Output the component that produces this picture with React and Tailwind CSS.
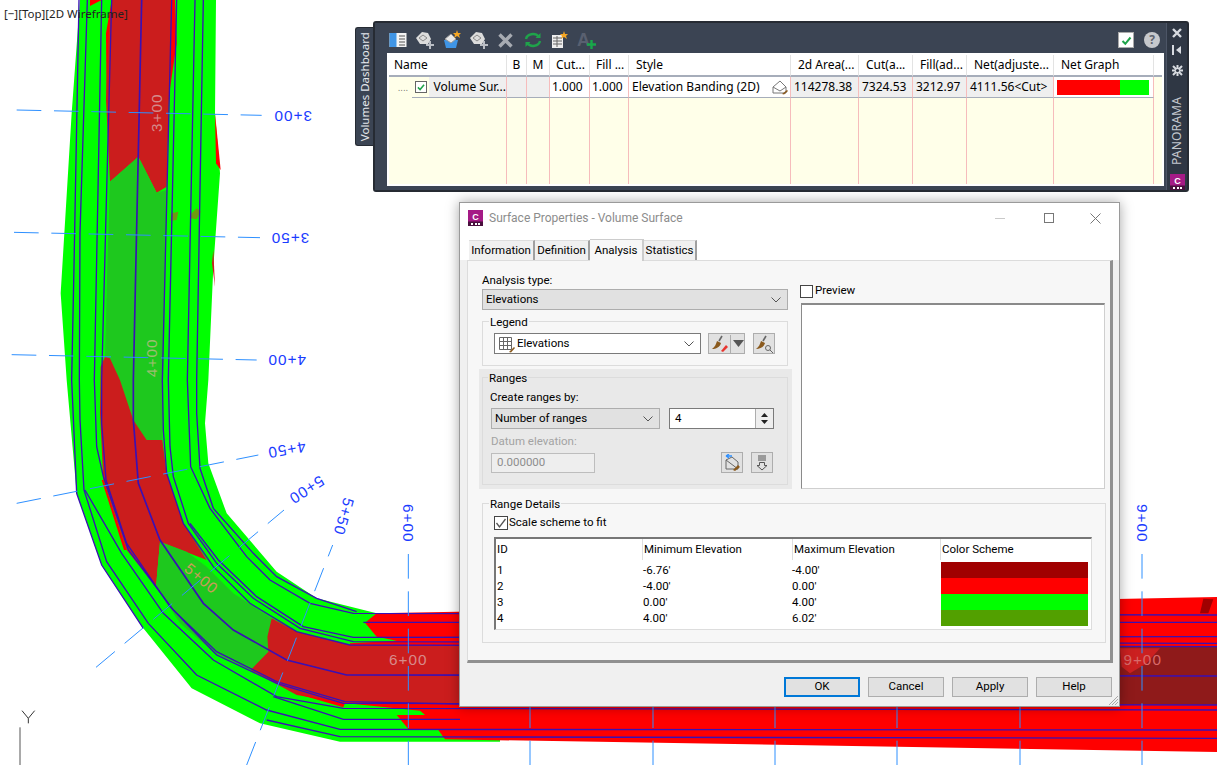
const BOTTOM = 1140;
const shift = (s) => s.split(" ").map((p) => { const [x, y] = p.split(","); return `${x},${Number(y) + BOTTOM}`; }).join(" ");

const LINES = [
  ["237,0 222,800 215,1140", "215,0 230,340 305,555 430,745"],
  ["262,0 240,700 238,1140", "238,0 240,120 252,330 320,545 445,730 590,885 800,990 1020,1048 3651,1050"],
  ["", "255,330 365,520 490,700 640,840 830,950 1030,985 3651,990"],
  ["305,0 283,1140", "283,0 290,200 310,290 385,510 520,690 650,825 830,910 1030,970 3651,975"],
  ["335,0 305,1140", "305,0 305,130 318,300 380,490 510,680 650,815 830,905 1035,965 1380,972"],
  ["425,0 400,1140", "400,0 400,120 415,310 480,480 610,670 700,750 860,840 1040,885 3651,888"],
  ["515,0 487,1140", "487,0 490,150 500,280 550,430 640,560 750,670 890,755 1050,795 3651,800"],
  ["530,0 505,1140", "505,0 510,200 520,290 565,430 650,550 760,655 900,745 1060,785 3651,790"],
  ["", "570,430 655,540 770,650 910,740 1060,772 3651,770"],
  ["585,0 562,1140", "562,0 572,260 630,385 740,530 810,600 930,670 1060,700 3651,705"],
  ["610,0 590,1140", "590,0 590,100 600,265 640,385 760,520 830,590 950,655 1070,695"],
  ["", "1090,727 3651,727"],
  ["", "820,950 1030,1018 1380,1018"],
  ["", "800,1020 1020,1070 3651,1075"],
];

const lbl = "#1a3cff";
function Road() {
  return (
    <svg className="absolute inset-0" width="1217" height="765" viewBox="0 0 3651 2295">
      <polygon fill="#00ff00" points={`240,0 648,0 645,340 660,520 640,800 625,1140 ${shift("615,130 625,250 680,400 830,575 950,655 1130,700 1500,700 1500,1085 1020,1085 780,1030 575,925 430,745 305,555 230,340 200,0")} 182,880 215,340`} />
      <polygon fill="#ff0000" points="270,0 305,0 270,18" />
      <polygon fill="#ff0000" points="645,340 662,510 648,490" />
      <polygon fill="#cb1d1d" points="640,750 645,860 636,790" />
      <polygon fill="#ff0000" points="318,100 335,0 525,0 530,130 505,300 320,300" />
      <polygon fill="#cb1d1d" points="335,0 510,0 512,100 500,560 470,578 415,470 330,545 318,300 325,120" />
      <polygon fill="#1ec81e" points={`330,545 415,470 470,578 500,570 495,900 490,1140 ${shift("487,180 440,180 400,120 360,0")} 330,1075 315,1070 322,800`} />
      <polygon fill="#6f9a10" points="515,640 535,635 530,660 512,662" />
      <polygon fill="#6f9a10" points="575,640 590,625 602,635 590,658 572,655" />
      <g transform={`translate(0 ${BOTTOM})`}>
        <polygon fill="#ff0000" points="1130,700 3651,651 3651,1116 1335,1078 1315,1050 1225,1047 1190,1005 1275,1005 1260,992 1040,970 1050,790 1190,782 1130,770 1095,728" />
        <polygon fill="#cb1d1d" points="315,-70 330,-65 360,0 400,120 440,180 487,180 500,280 550,430 620,540 480,485 468,620 380,510 310,300 300,100 302,-40" />
        <polygon fill="#ff0000" points="310,300 380,510 372,510 305,300" />
        <polygon fill="#1ec81e" points="480,485 560,515 620,560 700,640 815,715 802,770 805,815 752,870 650,825 540,730 468,620" />
        <polygon fill="#cb1d1d" points="815,715 890,755 1050,795 3400,800 3400,975 1035,970 890,945 752,870 805,815 802,770" />
        <polygon fill="#ff0000" points="885,940 1035,970 1030,982" />
        <polygon fill="#8f1a1a" points="3360,801 3651,801 3651,975 3360,975" />
        <polygon fill="#cb2020" points="3360,805 3480,805 3440,850 3390,880 3365,860" />
        <polygon fill="#a00000" points="3610,656 3640,658 3625,700 3600,700" />
      </g>
      {LINES.map(([a, b], i) => (
        <polyline key={i} fill="none" stroke="#3a10b5" strokeWidth={i === 5 ? 5 : 4} points={`${a} ${shift(b)}`} />
      ))}
      <g fill="none" stroke="#2e90ff" strokeWidth="3" strokeDasharray="74 38">
        <line x1="50" y1="330" x2="785" y2="346" />
        <line x1="42" y1="697" x2="780" y2="713" />
        <line x1="35" y1="1064" x2="770" y2="1080" />
        <line x1="50" y1="1510" x2="775" y2="1365" />
        <line x1="288" y1="2002" x2="852" y2="1530" />
        <line x1="740" y1="2295" x2="998" y2="1635" />
        {[1225, 1590, 1959, 2325, 2691, 3060, 3426].map((x) => (
          <line key={x} x1={x} y1="1662" x2={x} y2="2295" />
        ))}
      </g>
      <g fontFamily="'Liberation Sans', sans-serif" fontSize="46" fill={lbl} textAnchor="middle" dominantBaseline="central" letterSpacing="3">
        <text transform="translate(878 348) rotate(180)">3+00</text>
        <text transform="translate(870 715) rotate(180)">3+50</text>
        <text transform="translate(860 1082) rotate(180)">4+00</text>
        <text transform="translate(860 1350) rotate(170)">4+50</text>
        <text transform="translate(920 1470) rotate(147)">5+00</text>
        <text transform="translate(1032 1550) rotate(106)">5+50</text>
        <text transform="translate(1225 1570) rotate(90)">6+00</text>
        <text transform="translate(3427 1570) rotate(90)">9+00</text>
      </g>
      <g fontFamily="'Liberation Sans', sans-serif" fontSize="46" textAnchor="middle" dominantBaseline="central" letterSpacing="3">
        <text fill="#d58a8a" transform="translate(470 338) rotate(-90)">3+00</text>
        <text fill="#9dbd70" transform="translate(453 1073) rotate(-90)">4+00</text>
        <text fill="#c99a5a" transform="translate(605 1735) rotate(40)">5+00</text>
        <text fill="#d88a8a" x="1225" y="1978">6+00</text>
        <text fill="#d96a6a" x="3428" y="1978">9+00</text>
      </g>
      <g fill="none" stroke="#333" strokeWidth="3">
        <path d="M66 2132 L85 2155 L104 2132 M85 2155 V2170" />
        <path d="M60 2182 V2295" stroke="#555" />
      </g>
    </svg>
  );
}

const Book = () => (
  <svg width="18" height="16" viewBox="0 0 18 16"><rect x="0.5" y="1" width="17" height="14" fill="#f4f4f4" /><rect x="0.5" y="1" width="7" height="14" fill="#3f95e6" /><path d="M10 4h6M10 7h6M10 10h6M10 13h6" stroke="#555" /></svg>
);
const Surf = () => (
  <svg width="20" height="20" viewBox="0 0 20 20">
    <path d="M1 8 L7 2 L13 3 L16 9 L13 14 L5 14 Z" fill="#dcdcdc" />
    <path d="M4 8 L8 5 L12 8 L8 11Z" fill="none" stroke="#8a8a8a" />
    <path d="M15 11v8M11 15h8" stroke="#b9bdc4" strokeWidth="2" />
  </svg>
);
const Bucket = () => (
  <svg width="20" height="20" viewBox="0 0 20 20">
    <path d="M2 10 H16 L14 18 H4 Z" fill="#3f95e6" />
    <path d="M3 9 L9 4 L14 9 L9 13 Z" fill="#e8e8e8" stroke="#999" />
    <path d="M15 0 L16 3 L19 3 L17 5 L18 8 L15 6 L12 8 L13 5 L11 3 L14 3Z" fill="#f5a623" />
  </svg>
);
const Sheet = () => (
  <svg width="18" height="18" viewBox="0 0 18 18">
    <rect x="1" y="4" width="11" height="13" fill="#eee" />
    <path d="M2 7h9M2 10h9M2 13h9M6 5v11" stroke="#666" />
    <path d="M13 0 L14 3 L17 3 L15 5 L16 8 L13 6 L10 8 L11 5 L9 3 L12 3Z" fill="#f5a623" />
  </svg>
);
const Sync = () => (
  <svg width="18" height="18" viewBox="0 0 18 18" fill="none" stroke="#1fa34a" strokeWidth="2.4">
    <path d="M2 8 C3 3 11 1 15 6" /><path d="M16 10 C15 15 7 17 3 12" />
    <path d="M16.5 2 V7 H11.5 Z" fill="#1fa34a" stroke="none" /><path d="M1.5 16 V11 H6.5 Z" fill="#1fa34a" stroke="none" />
  </svg>
);
const Check = ({ size = 13 }) => (
  <svg width={size} height={size} viewBox="0 0 13 13"><path d="M2.5 7 L5.3 9.8 L10.5 3.5" fill="none" stroke="#1fa34a" strokeWidth="2" /></svg>
);
const Brush = ({ tail }) => (
  <svg width="18" height="18" viewBox="0 0 18 18">
    <path d="M11 1 L8 6" stroke="#666" strokeWidth="1.6" />
    <path d="M6 6 L10 8 C9 12 5 14 1 14 C4 12 5 9 6 6Z" fill="#8a5a1e" />
    {tail === "pen" && <path d="M10 16 L15 10 L17 12 L12 17 Z" fill="#e8352f" />}
    {tail === "glass" && <g fill="none" stroke="#666"><circle cx="13" cy="13" r="2.5" /><path d="M15 15 L18 18" /></g>}
  </svg>
);
const Chev = () => (
  <svg width="12" height="8" viewBox="0 0 12 8" className="shrink-0"><path d="M1.5 1.5 L6 6 L10.5 1.5" fill="none" stroke="#555" /></svg>
);
const CLogo = ({ w = 15, h = 16 }) => (
  <svg width={w} height={h} viewBox="0 0 15 16"><rect width="15" height="16" fill="#a51a86" /><rect y="11.5" width="15" height="4.5" fill="#4a0f3e" /><text x="7.5" y="9.5" textAnchor="middle" fontFamily="'Liberation Sans', sans-serif" fontWeight="700" fontSize="9" fill="#fff">C</text><path d="M3 13h2v2H3zM7 13h2v2H7zM10 13h2v2h-2z" fill="#fff" /></svg>
);

const COLS = [
  { h: "Name", w: 118 },
  { h: "B", w: 20, c: true, bg: "bg-[#efefef]" },
  { h: "M", w: 23, c: true, bg: "bg-[#efefef]" },
  { h: "Cut...", w: 40, v: "1.000", bg: "bg-white", tight: true },
  { h: "Fill ...", w: 39, v: "1.000", bg: "bg-white", tight: true },
  { h: "Style", w: 162, v: "Elevation Banding (2D)", bg: "bg-white", style: true },
  { h: "2d Area(...", w: 68, v: "114278.38", bg: "bg-[#efefef]" },
  { h: "Cut(a...", w: 54, v: "7324.53", bg: "bg-[#efefef]" },
  { h: "Fill(ad...", w: 54, v: "3212.97", bg: "bg-[#efefef]" },
  { h: "Net(adjuste...", w: 87, v: "4111.56<Cut>", bg: "bg-[#efefef]" },
  { h: "Net Graph", w: 100, graph: true },
];

function Panel() {
  return (
    <div className="absolute left-[355px] top-[21px] flex font-['Noto_Sans',sans-serif] text-[12px] leading-none text-black">
      <div className="mt-[6px] flex h-[119px] w-[18px] items-center justify-center rounded-l-[3px] border border-r-0 border-[#262b33] bg-[#3b4453]">
        <span className="-rotate-90 whitespace-nowrap text-[11.5px] text-[#e4e7ec]">Volumes Dashboard</span>
      </div>
      <div className="flex h-[171px] w-[816px] rounded-[3px] border-2 border-[#262b33] bg-[#2f3744]">
        <div className="flex w-[792px] shrink-0 flex-col border-r border-[#4c5566] bg-[#3b4453]">
          <div className="flex h-[30px] shrink-0 items-center pl-[9px] pr-[6px] pt-[4px]">
            {[<Book key="a" />, <Surf key="b" />, <Bucket key="c" />, <Surf key="d" />].map((ic, i) => (
              <span key={i} className="flex w-[27px] items-center justify-center">{ic}</span>
            ))}
            <span className="flex w-[27px] justify-center">
              <svg width="15" height="15" viewBox="0 0 15 15"><path d="M1.5 1.5 L13.5 13.5 M13.5 1.5 L1.5 13.5" stroke="#a7abb2" strokeWidth="3.4" /></svg>
            </span>
            <span className="flex w-[27px] justify-center"><Sync /></span>
            <span className="flex w-[27px] justify-center"><Sheet /></span>
            <span className="relative flex w-[27px] justify-center pr-[6px] font-['Liberation_Sans',sans-serif] text-[18px] font-bold text-[#596070]">
              A
              <svg width="11" height="11" viewBox="0 0 11 11" className="absolute left-[13px] top-[8px]"><path d="M5.5 1v9M1 5.5h9" stroke="#19a84a" strokeWidth="2.4" /></svg>
            </span>
            <span className="flex-1" />
            <span className="mr-[10px] flex h-[16px] w-[16px] items-center justify-center border border-[#aaa] bg-white"><Check /></span>
            <span className="flex h-[16px] w-[16px] items-center justify-center rounded-full bg-[#c6c8cc] text-[12px] font-bold text-[#5d636e]">?</span>
          </div>
          <div className="ml-[12px] flex h-[133px] w-[777px] border-2 border-white bg-[#ffffe9]">
            {COLS.map((c) => (
              <div key={c.h} style={{ width: c.w }} className="flex shrink-0 flex-col">
                <div className={`flex h-[22px] shrink-0 items-center whitespace-nowrap border-b-2 border-r border-b-[#a6adba] border-r-[#e3e3e3] bg-white ${c.h === "Name" ? "pl-[5px]" : c.tight ? "pl-[6px]" : c.c ? "pl-[1px]" : "pl-[7px]"}`}>
                  <span className={c.c ? "w-full pr-[1px] text-center" : ""}>{c.h}</span>
                </div>
                {c.h === "Name" ? (
                  <div className="flex h-[21px] shrink-0 border-r border-[#f6bcbc]">
                    <div className="flex w-[24px] items-center justify-end pr-[4px] text-[#666]"><span className="text-[8px] tracking-[0.5px]">....</span></div>
                    <div className="flex flex-1 border-b border-[#a6adba] bg-[#efefef]">
                      <div className="flex w-[17px] items-center justify-center bg-[#ffffe9]">
                        <span className="flex h-[12px] w-[12px] items-center justify-center border border-[#666] bg-white"><Check size={10} /></span>
                      </div>
                      <span className="flex items-center whitespace-nowrap pl-[4px]">Volume Sur...</span>
                    </div>
                  </div>
                ) : c.graph ? (
                  <div className="flex h-[21px] shrink-0 items-center border-b border-r border-b-[#a6adba] border-r-[#f6bcbc] bg-white pl-[3px]">
                    <div className="h-[15px] w-[63px] bg-[#ff0000]" />
                    <div className="h-[15px] w-[29px] bg-[#00ff00]" />
                  </div>
                ) : (
                  <div className={`flex h-[21px] shrink-0 items-center justify-between whitespace-nowrap border-b border-r border-b-[#a6adba] border-r-[#f6bcbc] ${c.tight ? "pl-[2px]" : "pl-[3px]"} ${c.bg}`}>
                    <span>{c.v}</span>
                    {c.style && (
                      <svg width="17" height="16" viewBox="0 0 17 16" className="mr-[1px]"><path d="M1 8 L8 2 L14 8 V14 H1Z M1 8 L8 12 L14 8" fill="none" stroke="#777" /><path d="M10 15 L15 11 L16 12 L12 15.5Z" fill="#8a5a1e" /></svg>
                    )}
                  </div>
                )}
                <div className="flex-1 border-r border-[#f6bcbc]" />
              </div>
            ))}
            <div className="flex flex-1 flex-col"><div className="h-[22px] border-b-2 border-[#a6adba] bg-white" /></div>
          </div>
        </div>
        <div className="flex w-[20px] min-w-0 shrink-0 flex-col items-center pt-[3px] text-[#d8dbe0]">
          <svg width="12" height="12" viewBox="0 0 12 12" className="mt-[1px] shrink-0"><path d="M2 2 L10 10 M10 2 L2 10" stroke="#d8dbe0" strokeWidth="2.4" /></svg>
          <svg width="12" height="12" viewBox="0 0 12 12" className="mt-[5px] shrink-0"><path d="M2 1v10" stroke="#d8dbe0" strokeWidth="2" /><path d="M10 2 L5 6 L10 10Z" fill="#d8dbe0" /></svg>
          <svg width="13" height="13" viewBox="0 0 13 13" className="mt-[8px] shrink-0"><path d="M2 2 L11 11 M11 2 L2 11 M6.5 1v11M1 6.5h11" stroke="#d8dbe0" strokeWidth="2" /><circle cx="6.5" cy="6.5" r="1.6" fill="#2f3744" /></svg>
          <div className="flex h-[94px] w-[20px] shrink-0 items-center justify-center pt-[14px]">
            <span className="-rotate-90 whitespace-nowrap text-[12px] tracking-[0.2px] text-[#c3c7ce]">PANORAMA</span>
          </div>
          <div className="mt-[3px] shrink-0"><CLogo /></div>
        </div>
      </div>
    </div>
  );
}

const Combo = ({ w, children, white }) => (
  <div style={{ width: w }} className={`flex h-[21px] items-center justify-between border pl-[3px] pr-[5px] ${white ? "border-[#7a7a7a] bg-white" : "border-[#adadad] bg-[#e1e1e1]"}`}>
    <span className="flex items-center whitespace-nowrap pt-[1px]">{children}</span>
    <Chev />
  </div>
);
const IconBtn = ({ children }) => (
  <div className="flex h-[21px] w-[22px] items-center justify-center border border-[#adadad] bg-[#e1e1e1]">{children}</div>
);
const Group = ({ label, className, children, lx = 6 }) => (
  <div className={`relative border border-[#dcdcdc] ${className}`}>
    <span style={{ left: lx }} className="absolute top-[-5px] bg-inherit px-[1px] leading-none">{label}</span>
    {children}
  </div>
);

function Dialog() {
  const rows = [["1", "-6.76'", "-4.00'", "bg-[#a00000]"], ["2", "-4.00'", "0.00'", "bg-[#ff0000]"], ["3", "0.00'", "4.00'", "bg-[#00ff00]"], ["4", "4.00'", "6.02'", "bg-[#52a000]"]];
  return (
    <div className="absolute left-[459px] top-[202px] flex h-[505px] w-[661px] flex-col border border-[#9a9a9a] bg-[#f0f0f0] font-['Roboto',sans-serif] text-[11.5px] leading-none text-black shadow-[0_0_12px_rgba(0,0,0,0.35)]">
      <div className="flex h-[30px] shrink-0 items-center bg-white pl-[8px]">
        <CLogo w={15} h={16} />
        <span className="ml-[6px] text-[12px] text-[#8c8c8c]">Surface Properties - Volume Surface</span>
        <span className="flex-1" />
        <span className="mr-[39px] h-px w-[10px] bg-[#c9c9c9]" />
        <span className="mr-[36px] h-[10px] w-[10px] border border-[#777]" />
        <svg width="11" height="11" viewBox="0 0 11 11" className="mr-[18px]"><path d="M0.5 0.5 L10.5 10.5 M10.5 0.5 L0.5 10.5" stroke="#777" /></svg>
      </div>
      <div className="flex h-[27px] shrink-0 items-end bg-white pl-[9px]">
        {[["Information", 66], ["Definition", 55], ["Analysis", 54, true], ["Statistics", 53]].map(([t, w, on]) => (
          <div key={t} style={{ width: w }} className={`flex items-center justify-center border-r-2 border-[#a0a0a0] ${on ? "relative z-10 mb-[-1px] h-[22px] border-t border-x-0 border-t-[#ccc] border-r-[#ccc] bg-[#f7f7f7]" : "h-[20px] border-t border-t-[#ddd] bg-[#f0f0f0]"}`}>{t}</div>
        ))}
      </div>
      <div className="mx-[7px] flex h-[403px] w-[646px] shrink-0 flex-col border-t border-l border-t-[#dcdcdc] border-l-[#dcdcdc] border-b-[3px] border-r-[3px] border-b-[#909090] border-r-[#909090] bg-[#f7f7f7] pl-[14px]">
        <div className="flex">
          <div className="flex w-[312px] shrink-0 flex-col">
            <div className="h-[28px] pt-[14px]">Analysis type:</div>
            <div className="h-[21px]"><Combo w={306}>Elevations</Combo></div>
            <Group label="Legend" className="mt-[11px] flex h-[45px] w-[306px] items-center bg-[#f7f7f7] pl-[11px]">
              <Combo w={207} white>
                <svg width="18" height="18" viewBox="0 0 18 18" className="mr-[1px]"><path d="M1.5 2.5h12v12h-12zM1.5 6.5h12M1.5 10.5h12M5.5 2.5v12M9.5 2.5v12" fill="none" stroke="#666" /><path d="M11 17 L16 12 L17 13 L13 17.5Z" fill="#8a5a1e" /></svg>
                Elevations
              </Combo>
              <div className="ml-[7px] flex h-[21px] w-[37px] items-center border border-[#adadad] bg-[#e1e1e1]">
                <span className="flex w-[22px] justify-center border-r border-[#adadad]"><Brush tail="pen" /></span>
                <svg width="11" height="7" viewBox="0 0 11 7" className="ml-[2px]"><path d="M0 0 H11 L5.5 7Z" fill="#555" /></svg>
              </div>
              <div className="ml-[8px]"><IconBtn><Brush tail="glass" /></IconBtn></div>
            </Group>
            <div className="ml-[-3px] mt-[3px] h-[120px] w-[313px] bg-[#e9e9e9] pl-[3px] pt-[8px]">
              <Group label="Ranges" lx={5} className="h-[108px] w-[306px] bg-[#e9e9e9] pl-[7px]">
                <div className="h-[24px] pt-[14px]">Create ranges by:</div>
                <div className="ml-[1px] mt-[6px] flex">
                  <Combo w={169}>Number of ranges</Combo>
                  <div className="ml-[9px] flex h-[21px] w-[105px] border border-[#7a7a7a] bg-white">
                    <span className="flex flex-1 items-center pl-[5px]">4</span>
                    <div className="flex w-[18px] flex-col items-center justify-center gap-[3px] border-l border-[#adadad] bg-[#eee]">
                      <svg width="7" height="4" viewBox="0 0 7 4"><path d="M0 4 L3.5 0 L7 4Z" fill="#222" /></svg>
                      <svg width="7" height="4" viewBox="0 0 7 4"><path d="M0 0 L7 0 L3.5 4Z" fill="#222" /></svg>
                    </div>
                  </div>
                </div>
                <div className="h-[18px] pl-[1px] pt-[7px] text-[#a3a3a3]">Datum elevation:</div>
                <div className="ml-[1px] mt-[5px] flex items-center">
                  <div className="flex h-[20px] w-[104px] items-center border border-[#bdbdbd] bg-[#eeeeee] pl-[5px] text-[#8d8d8d]">0.000000</div>
                  <div className="ml-[126px]">
                    <IconBtn>
                      <svg width="18" height="18" viewBox="0 0 18 18" fill="none"><path d="M3 6 L9 3 L15 8 V15 H3Z M3 6 L15 15" stroke="#666" /><path d="M3 2 H9 M3 2 L6 0 M3 2 L6 4" stroke="#2e90ff" strokeWidth="1.3" /><path d="M10 16 L15 11 L17 13 L12 17Z" fill="#8a5a1e" /></svg>
                    </IconBtn>
                  </div>
                  <div className="ml-[8px]">
                    <IconBtn>
                      <svg width="14" height="16" viewBox="0 0 14 16" fill="none" stroke="#555"><path d="M3 1h8M3 3h8M3 5h8" /><path d="M4.5 7.5h5v3h2.5L7 15 2 10.5h2.5z" /></svg>
                    </IconBtn>
                  </div>
                </div>
              </Group>
            </div>
          </div>
          <div className="flex flex-col pl-[6px] pt-[21px]">
            <div className="flex h-[18px] items-center">
              <span className="h-[13px] w-[13px] border border-[#444] bg-white" />
              <span className="ml-[2px]">Preview</span>
            </div>
            <div className="ml-[1px] mt-[3px] h-[186px] w-[304px] border border-[#cfcfcf] border-l-[#8a8a8a] border-t-2 border-t-[#8a8a8a] bg-white" />
          </div>
        </div>
        <Group label="Range Details" className="mt-[14px] h-[140px] w-[624px] bg-[#f7f7f7] pl-[11px]">
          <div className="flex h-[33px] items-center pt-[4px]">
            <span className="flex h-[14px] w-[14px] items-center justify-center border border-[#444] bg-white">
              <svg width="12" height="12" viewBox="0 0 12 12"><path d="M1.5 6 L4.5 10 L10.5 2" fill="none" stroke="#555" strokeWidth="1.3" /></svg>
            </span>
            <span className="ml-[1px]">Scale scheme to fit</span>
          </div>
          <div className="w-[598px] border-l-2 border-t-2 border-[#777] border-b border-r border-b-[#ddd] border-r-[#ddd] bg-white pb-[3px]">
            <div className="flex h-[21px]">
              {[["ID", 146], ["Minimum Elevation", 150], ["Maximum Elevation", 148], ["Color Scheme", 150]].map(([t, w], i) => (
                <div key={t} style={{ width: w }} className={`flex items-center pl-[1px] ${i ? "border-l border-[#dedede]" : ""}`}>{t}</div>
              ))}
            </div>
            {rows.map(([id, a, b, col], i) => (
              <div key={id} className={`flex h-[16px] items-center ${i === 0 ? "mt-[2px]" : ""}`}>
                <span className="w-[146px] pl-[1px] pt-[1px]">{id}</span>
                <span className="w-[150px] pl-[1px] pt-[1px]">{a}</span>
                <span className="w-[149px] pt-[1px]">{b}</span>
                <span className={`h-[16px] w-[147px] ${col}`} />
              </div>
            ))}
          </div>
        </Group>
      </div>
      <div className="relative flex flex-1 items-start justify-end gap-[8px] pr-[7px] pt-[14px]">
        <div className="flex h-[20px] w-[76px] items-center justify-center border-2 border-[#0078d7] bg-[#e1e1e1]">OK</div>
        {["Cancel", "Apply", "Help"].map((t) => (
          <div key={t} className="flex h-[20px] w-[76px] items-center justify-center border border-[#adadad] bg-[#e1e1e1]">{t}</div>
        ))}
        <svg width="12" height="12" viewBox="0 0 12 12" className="absolute bottom-0 right-0"><path d="M11 2 L2 11 M11 5 L5 11 M11 8 L8 11" stroke="#a8a8a8" /></svg>
      </div>
    </div>
  );
}

export default function App() {
  return (
    <div className="relative h-[765px] w-[1217px] overflow-hidden bg-white">
      <Road />
      <div className="absolute left-[4px] top-[8px] font-['Noto_Sans',sans-serif] text-[11.5px] leading-[12px] text-[#222]">[−][Top][2D Wireframe]</div>
      <Panel />
      <Dialog />
    </div>
  );
}
